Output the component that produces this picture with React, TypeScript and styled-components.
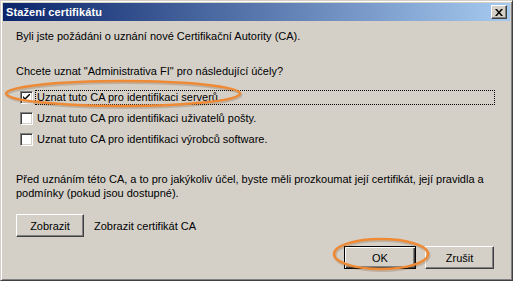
import React from 'react'
import styled, { createGlobalStyle } from 'styled-components'

const GlobalStyle = createGlobalStyle`
    html, body {
        margin: 0;
        padding: 0;
        background: #d4d0c8;
    }
    body {
        font-family: "Liberation Sans", Arial, sans-serif;
        font-size: 11px;
        color: #000;
    }
`

const Window = styled.div`
    position: relative;
    box-sizing: border-box;
    width: 513px;
    height: 281px;
    background: #d4d0c8;
    border-style: solid;
    border-width: 1px;
    border-color: #d4d0c8 #404040 #404040 #d4d0c8;
    box-shadow: inset 1px 1px 0 #fff, inset -1px -1px 0 #808080;
    padding: 2px;
    display: flex;
    flex-direction: column;
`

const TitleBar = styled.div`
    height: 18px;
    display: flex;
    align-items: center;
    justify-content: space-between;
    padding: 0 3px 0 3px;
    background: linear-gradient(to right, #0a246a, #a6caf0);
`

const Title = styled.span`
    color: #fff;
    font-weight: bold;
    font-size: 11px;
    letter-spacing: 0.1px;
`

const CloseButton = styled.div`
    box-sizing: border-box;
    width: 16px;
    height: 14px;
    background: #d4d0c8;
    border-style: solid;
    border-width: 1px;
    border-color: #fff #404040 #404040 #fff;
    box-shadow: inset -1px -1px 0 #808080;
    display: flex;
    align-items: center;
    justify-content: center;
`

const Body = styled.div`
    flex: 1;
    display: flex;
    flex-direction: column;
    padding: 9px 15px 0 13px;
`

const Text = styled.div<{ $top?: number }>`
    line-height: 13px;
    margin-top: ${props => props.$top ?? 0}px;
`

const Options = styled.div`
    display: flex;
    flex-direction: column;
    margin-top: 9px;
    margin-left: 4px;
`

const OptionRow = styled.div`
    height: 21px;
    display: flex;
    align-items: center;
    gap: 2px;
`

const Box = styled.div`
    box-sizing: border-box;
    width: 13px;
    height: 13px;
    flex: none;
    background: #fff;
    border-style: solid;
    border-width: 1px;
    border-color: #808080 #fff #fff #808080;
    box-shadow: inset 1px 1px 0 #404040, inset -1px -1px 0 #d4d0c8;
    display: flex;
    align-items: center;
    justify-content: center;
`

const OptionLabel = styled.div<{ $focused?: boolean }>`
    flex: 1;
    box-sizing: border-box;
    height: 15px;
    line-height: 13px;
    padding: 0 1px;
    border: 1px dotted ${props => (props.$focused ? '#000' : 'transparent')};
`

const Paragraph = styled.div`
    margin-top: 22px;
    line-height: 14px;
    margin-right: -4px;
`

const ViewRow = styled.div`
    margin-top: 14px;
    display: flex;
    align-items: center;
    gap: 10px;
`

const Button = styled.div<{ $default?: boolean; $width: number }>`
    box-sizing: border-box;
    width: ${props => props.$width}px;
    height: 23px;
    display: flex;
    align-items: center;
    justify-content: center;
    background: #d4d0c8;
    border-style: solid;
    border-width: 1px;
    border-color: ${props => (props.$default ? '#000' : '#fff #404040 #404040 #fff')};
    box-shadow: ${props =>
        props.$default
            ? 'inset 1px 1px 0 #fff, inset -1px -1px 0 #404040, inset -2px -2px 0 #808080'
            : 'inset -1px -1px 0 #808080'};
`

const Footer = styled.div`
    margin-top: 9px;
    display: flex;
    justify-content: flex-end;
    gap: 9px;
    padding-right: 1px;
`

const Highlight = styled.svg<{ $x: number; $y: number }>`
    position: absolute;
    left: ${props => props.$x}px;
    top: ${props => props.$y}px;
    overflow: visible;
    pointer-events: none;
`

function Check() {
    return (
        <svg width="7" height="7" viewBox="0 0 7 7">
            <path d="M0 2 L0 4 L2 6 L7 1 L7 -1 L2 4 Z" fill="#000" />
        </svg>
    )
}

function Ring({ x, y, w, h }: { x: number; y: number; w: number; h: number }) {
    return (
        <Highlight $x={x} $y={y} width={w} height={h}>
            <ellipse cx={w / 2 + 1} cy={h / 2 + 1.5} rx={w / 2 - 2} ry={h / 2 - 2} fill="none" stroke="rgba(120,80,40,0.25)" strokeWidth="3" />
            <ellipse cx={w / 2} cy={h / 2} rx={w / 2 - 2} ry={h / 2 - 2} fill="none" stroke="#ee8a35" strokeWidth="2.5" />
        </Highlight>
    )
}

const OPTIONS = [
    { label: 'Uznat tuto CA pro identifikaci serverů.', checked: true },
    { label: 'Uznat tuto CA pro identifikaci uživatelů pošty.', checked: false },
    { label: 'Uznat tuto CA pro identifikaci výrobců software.', checked: false },
]

export default function App() {
    return (
        <>
            <GlobalStyle />
            <Window>
                <TitleBar>
                    <Title>Stažení certifikátu</Title>
                    <CloseButton>
                        <svg width="8" height="7" viewBox="0 0 8 7">
                            <path d="M0 0h2l2 2.5L6 0h2L5 3.5 8 7H6L4 4.5 2 7H0l3-3.5z" fill="#000" />
                        </svg>
                    </CloseButton>
                </TitleBar>
                <Body>
                    <Text>Byli jste požádáni o uznání nové Certifikační Autority (CA).</Text>
                    <Text $top={22}>Chcete uznat "Administrativa FI" pro následující účely?</Text>
                    <Options>
                        {OPTIONS.map((o, i) => (
                            <OptionRow key={o.label}>
                                <Box>{o.checked && <Check />}</Box>
                                <OptionLabel $focused={i === 0}>{o.label}</OptionLabel>
                            </OptionRow>
                        ))}
                    </Options>
                    <Paragraph>
                        Před uznáním této CA, a to pro jakýkoliv účel, byste měli prozkoumat její certifikát, její pravidla a
                        podmínky (pokud jsou dostupné).
                    </Paragraph>
                    <ViewRow>
                        <Button $width={68}>Zobrazit</Button>
                        <span>Zobrazit certifikát CA</span>
                    </ViewRow>
                    <Footer>
                        <Button $default $width={72}>OK</Button>
                        <Button $width={69}>Zrušit</Button>
                    </Footer>
                </Body>
                <Ring x={3} y={78} w={238} h={29} />
                <Ring x={331} y={236} w={98} h={34} />
            </Window>
        </>
    )
}
